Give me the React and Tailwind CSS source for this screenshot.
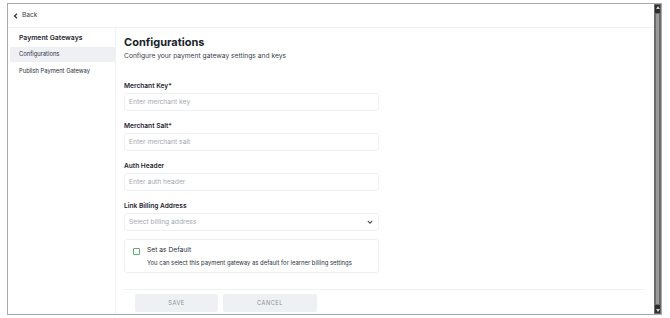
import React from "react";

const FONT = { fontFamily: "Inter, 'Noto Sans', sans-serif" };

function Field({ label, placeholder, select }) {
  return (
    <div className="mb-[11px]">
      <div className="text-[6.6px] font-semibold text-[#1f2430] leading-[9px] mb-[2px]">{label}</div>
      <div className="w-[255px] h-[18px] border border-[#eef0f3] rounded-[3px] flex items-center justify-between pl-[4px] pr-[5px]">
        <span className="text-[6.7px] leading-[9px] text-[#a3a8b2]">{placeholder}</span>
        {select && (
          <svg width="6" height="4" viewBox="0 0 8 5">
            <path d="M1 1l3 3 3-3" fill="none" stroke="#4b5160" strokeWidth="1.6" />
          </svg>
        )}
      </div>
    </div>
  );
}

export default function App() {
  return (
    <div className="w-[670px] h-[318px] bg-white overflow-hidden" style={FONT}>
      <div className="ml-[7px] mt-[3px] w-[655px] h-[312px] border border-[#a9a9a9] flex">
        <div className="flex-1 flex flex-col min-w-0">
          {/* top bar */}
          <div className="h-[24px] border-b border-[#eef0f2] flex items-center pl-[5px] gap-[4px]">
            <svg width="5" height="6" viewBox="0 0 5 6">
              <path d="M4 0.8L1.5 3 4 5.2" fill="none" stroke="#2a2f3a" strokeWidth="1.2" />
            </svg>
            <span className="text-[6.6px] leading-[9px] text-[#3b404b]">Back</span>
          </div>
          <div className="flex flex-1 min-h-0">
            {/* sidebar */}
            <div className="w-[108px] border-r border-[#f0f1f3] pt-[4px]">
              <div className="pl-[11px] text-[6.85px] font-semibold text-[#1f2430] h-[12px] flex items-center">Payment Gateways</div>
              <div className="ml-[2px] mt-[3px] h-[15px] bg-[#eef0f4] pl-[9px] flex items-center text-[5.8px] text-[#2b303b]">Configurations</div>
              <div className="pl-[11px] h-[18px] flex items-center text-[5.8px] text-[#2b303b]">Publish Payment Gateway</div>
            </div>
            {/* main */}
            <div className="flex-1 pl-[8px] pr-[10px] pt-[6px] flex flex-col">
              <div className="text-[11px] font-bold text-[#1a1f2b] leading-[16px]">Configurations</div>
              <div className="text-[6.7px] leading-[10px] text-[#3b404b] mt-[1px] mb-[21px]">Configure your payment gateway settings and keys</div>
              <Field label="Merchant Key*" placeholder="Enter merchant key" />
              <Field label="Merchant Salt*" placeholder="Enter merchant salt" />
              <Field label="Auth Header" placeholder="Enter auth header" />
              <Field label="Link Billing Address" placeholder="Select billing address" select />
              <div className="-mt-[3px] w-[255px] h-[34px] border border-[#eef0f3] rounded-[3px] flex pl-[8px] pt-[6px] gap-[7px]">
                <div className="w-[7px] h-[7px] border border-[#5fae6e] rounded-[1px] mt-[2px]" />
                <div>
                  <div className="text-[6.7px] text-[#2b303b] leading-[9px]">Set as Default</div>
                  <div className="text-[5.9px] leading-[8px] text-[#2b303b] mt-[4px]">You can select this payment gateway as default for learner billing settings</div>
                </div>
              </div>
              <div className="mt-[16px] border-t border-[#eef0f2] pt-[4px] flex gap-[5px] pl-[11px]">
                <div className="w-[83px] h-[18px] bg-[#eef0f4] rounded-[2px] flex items-center justify-center text-[5.6px] tracking-[0.1em] text-[#8a8f99]">SAVE</div>
                <div className="w-[94px] h-[18px] bg-[#eef0f4] rounded-[2px] flex items-center justify-center text-[5.6px] tracking-[0.1em] text-[#8a8f99]">CANCEL</div>
              </div>
            </div>
          </div>
        </div>
        {/* scrollbar */}
        <div className="w-[7px] bg-[#6b6b6b] flex flex-col justify-between items-center py-[1px]">
          <div className="w-[5px] h-[8px] bg-[#2e2e2e] flex items-start justify-center">
            <div className="w-0 h-0 border-l-[2px] border-r-[2px] border-b-[3px] border-l-transparent border-r-transparent border-b-[#cfcfcf] mt-[1px]" />
          </div>
          <div className="flex-1 w-[3px] bg-[#9a9a9a] my-[1px]" />
          <div className="w-[5px] h-[8px] bg-[#2e2e2e] flex items-end justify-center">
            <div className="w-0 h-0 border-l-[2px] border-r-[2px] border-t-[3px] border-l-transparent border-r-transparent border-t-[#cfcfcf] mb-[1px]" />
          </div>
        </div>
      </div>
    </div>
  );
}
